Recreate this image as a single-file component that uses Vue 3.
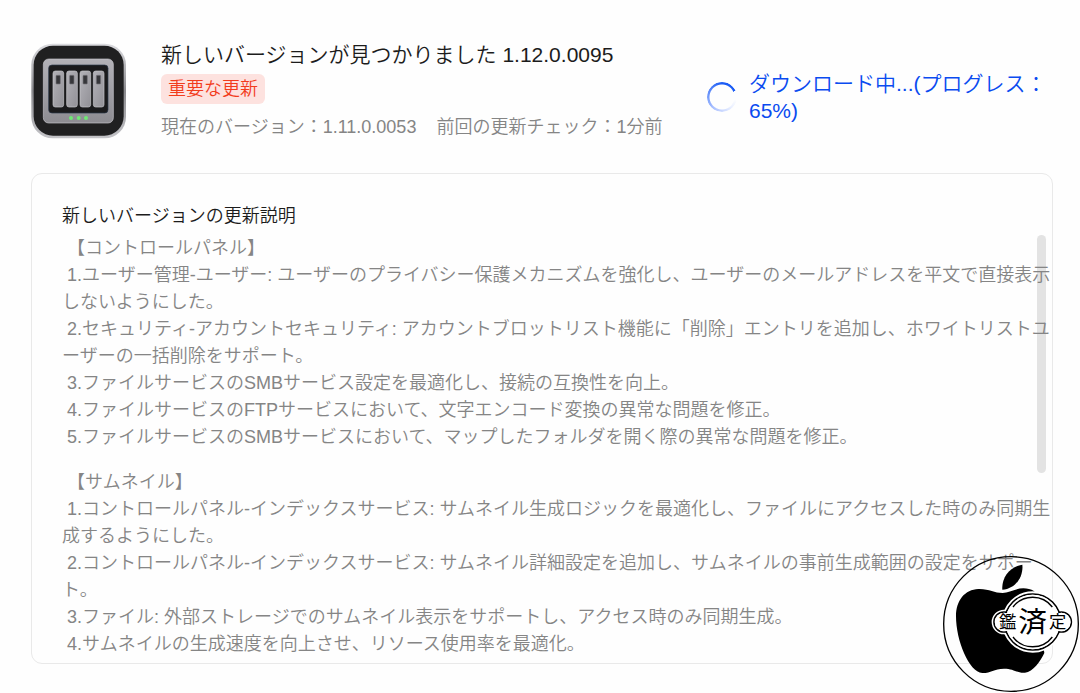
<script setup>
const sections = [
  {
    title: ' 【コントロールパネル】',
    items: [
      ' 1.ユーザー管理-ユーザー: ユーザーのプライバシー保護メカニズムを強化し、ユーザーのメールアドレスを平文で直接表示しないようにした。',
      ' 2.セキュリティ-アカウントセキュリティ: アカウントブロットリスト機能に「削除」エントリを追加し、ホワイトリストユーザーの一括削除をサポート。',
      ' 3.ファイルサービスのSMBサービス設定を最適化し、接続の互換性を向上。',
      ' 4.ファイルサービスのFTPサービスにおいて、文字エンコード変換の異常な問題を修正。',
      ' 5.ファイルサービスのSMBサービスにおいて、マップしたフォルダを開く際の異常な問題を修正。',
    ],
  },
  {
    title: ' 【サムネイル】',
    items: [
      ' 1.コントロールパネル-インデックスサービス: サムネイル生成ロジックを最適化し、ファイルにアクセスした時のみ同期生成するようにした。',
      ' 2.コントロールパネル-インデックスサービス: サムネイル詳細設定を追加し、サムネイルの事前生成範囲の設定をサポート。',
      ' 3.ファイル: 外部ストレージでのサムネイル表示をサポートし、アクセス時のみ同期生成。',
      ' 4.サムネイルの生成速度を向上させ、リソース使用率を最適化。',
    ],
  },
]
const bays = [79, 120, 160, 200]
const leds = [133, 156, 178]
</script>

<template>
  <main class="page" lang="ja">
    <header class="head">
      <svg class="app-icon" viewBox="13 18 288 288" aria-hidden="true">
        <defs>
          <linearGradient id="rim" x1="0" y1="0" x2="0" y2="1">
            <stop offset="0" stop-color="#dcdce0" />
            <stop offset="0.5" stop-color="#8a8a8e" />
            <stop offset="1" stop-color="#c4c4c8" />
          </linearGradient>
          <linearGradient id="metal" x1="0" y1="0" x2="0" y2="1">
            <stop offset="0" stop-color="#b3b2b8" />
            <stop offset="1" stop-color="#8d8c92" />
          </linearGradient>
          <linearGradient id="bay" x1="0" y1="0" x2="1" y2="1">
            <stop offset="0" stop-color="#b3b2b8" />
            <stop offset="1" stop-color="#929197" />
          </linearGradient>
        </defs>
        <rect x="14" y="20" width="284" height="284" rx="64" fill="url(#rim)" />
        <rect x="21" y="26" width="270" height="270" rx="58" fill="#202021" />
        <rect x="50" y="66" width="210" height="192" rx="16" fill="url(#metal)" stroke="#c8c7cd" stroke-width="2" />
        <rect x="66" y="84" width="178" height="144" rx="10" fill="#1b1b1d" stroke="#2c3a4d" stroke-width="2" />
        <g v-for="x in bays" :key="x">
          <rect :x="x" y="102" width="32" height="108" rx="7" fill="url(#bay)" stroke="#c9c8cd" stroke-width="2" />
          <rect :x="x + 9" y="115" width="13" height="26" rx="2" fill="#36363a" stroke="#77767b" stroke-width="2" />
        </g>
        <circle v-for="x in leds" :key="x" :cx="x" cy="243" r="6" fill="#6fe874" />
      </svg>

      <div class="info">
        <h1>新しいバージョンが見つかりました 1.12.0.0095</h1>
        <span class="badge">重要な更新</span>
        <p class="meta">
          <span>現在のバージョン：1.11.0.0053</span>
          <span>前回の更新チェック：1分前</span>
        </p>
      </div>

      <div class="status" role="status">
        <span class="spinner"></span>
        <span class="progress">ダウンロード中...(プログレス：65%)</span>
      </div>
    </header>

    <section class="card">
      <h2>新しいバージョンの更新説明</h2>
      <div class="notes">
        <div v-for="s in sections" :key="s.title" class="group">
          <h3>{{ s.title }}</h3>
          <p v-for="t in s.items" :key="t">{{ t }}</p>
        </div>
      </div>
      <span class="thumb"></span>
    </section>

    <svg class="seal" viewBox="0 0 450 450" aria-hidden="true">
      <circle cx="243" cy="243" r="202" fill="none" stroke="#000" stroke-width="4" />
      <path d="M277 65C281 103 254 139 217 140C214 104 240 71 277 65Z" />
      <path d="M218 150C192 150 178 137 145 138C105 140 78 171 78 220C78 292 117 388 157 390C181 391 191 377 222 377C252 377 262 391 285 389C309 387 331 355 343 330L313 145C302 138 292 136 280 136C256 136 236 150 218 150Z" />
      <g fill="#fff" stroke="#fff" stroke-width="12">
        <circle cx="308" cy="237" r="86" />
        <circle cx="222" cy="237" r="31" />
        <circle cx="394" cy="237" r="31" />
      </g>
      <g fill="#fff" stroke="#000" stroke-width="5">
        <circle cx="308" cy="237" r="84" />
        <circle cx="222" cy="237" r="30" />
        <circle cx="394" cy="237" r="30" />
      </g>
      <g fill="#fff">
        <circle cx="308" cy="237" r="82" />
        <circle cx="222" cy="237" r="28" />
        <circle cx="394" cy="237" r="28" />
      </g>
      <path d="M249 192A74 74 0 0 1 367 192M249 282A74 74 0 0 0 367 282" fill="none" stroke="#000" stroke-width="4" />
      <g text-anchor="middle" class="seal-text">
        <text x="233" y="256" font-size="52">鑑</text>
        <text x="308" y="268" font-size="86">済</text>
        <text x="383" y="256" font-size="52">定</text>
      </g>
    </svg>
  </main>
</template>

<style>
body {
  margin: 0;
  background: #fefefe;
}
</style>

<style scoped>
.page {
  position: relative;
  box-sizing: border-box;
  min-height: 100vh;
  padding: 40px 27px 28px 31px;
  font-family: "Liberation Sans", "Noto Sans CJK JP", sans-serif;
  font-size: 18px;
  line-height: 27px;
  font-weight: 350;
  color: #858585;
}
h1, h2, h3, p {
  margin: 0;
  font-weight: 350;
}
.head {
  display: flex;
  align-items: flex-start;
}
.app-icon {
  flex: none;
  width: 96px;
  height: 96px;
  margin-top: 3px;
}
.info {
  flex: 1;
  margin-left: 34px;
}
h1 {
  font-size: 21px;
  line-height: 30px;
  color: #1c1c1c;
}
.badge {
  display: block;
  width: fit-content;
  margin-top: 4px;
  padding: 1px 7px 0;
  border-radius: 6px;
  font-size: 18px;
  line-height: 29px;
  background: #fde2df;
  color: #f23c1c;
}
.meta {
  display: flex;
  gap: 20px;
  margin-top: 10px;
}
.status {
  display: flex;
  align-items: center;
  gap: 12px;
  width: 346px;
  margin-top: 30px;
  font-size: 21px;
  color: #0a4bf0;
}
.spinner {
  flex: none;
  width: 30px;
  height: 30px;
  border-radius: 50%;
  background: conic-gradient(#1b5cf5 0deg 65deg, transparent 66deg 100deg, #e8eeff 140deg, #a9c0ff 220deg, #1b5cf5 360deg);
  -webkit-mask: radial-gradient(circle, transparent 12px, #000 13px);
  mask: radial-gradient(circle, transparent 12px, #000 13px);
}
.card {
  position: relative;
  margin-top: 32px;
  padding: 29px 0 5px 30px;
  border: 1px solid #e9e9e9;
  border-radius: 11px;
}
h2 {
  font-size: 18px;
  line-height: 27px;
  color: #1c1c1c;
}
.notes {
  margin-top: 5px;
  white-space: pre-wrap;
  line-break: loose;
}
h3 {
  font-size: 18px;
}
.group + .group {
  margin-top: 18px;
}
.thumb {
  position: absolute;
  top: 61px;
  right: 6px;
  width: 9px;
  height: 238px;
  border-radius: 5px;
  background: #e3e3e3;
  z-index: -1;
}
.seal {
  position: absolute;
  right: 0;
  top: 543px;
  width: 150px;
  height: 150px;
}
.seal-text {
  font-family: "Noto Sans CJK JP", sans-serif;
  font-weight: 400;
}
</style>
